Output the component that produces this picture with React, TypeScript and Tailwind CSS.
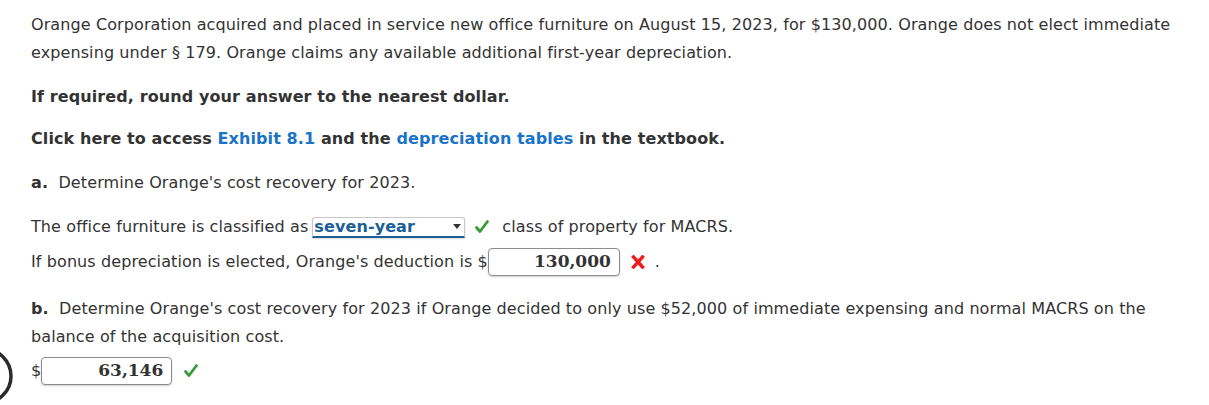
import React from 'react';

const Check: React.FC = () => (
  <svg width="16" height="16" viewBox="0 0 16 16" className="inline-block">
    <path d="M2.5 8.5 L6 12.5 L13.5 2.5" fill="none" stroke="#3a9a3a" strokeWidth="2.8" strokeLinecap="round" strokeLinejoin="round" />
  </svg>
);

const Cross: React.FC = () => (
  <svg width="14" height="14" viewBox="0 0 14 14" className="inline-block">
    <path d="M2.5 2 L11.5 12 M11.5 2 L2.5 12" fill="none" stroke="#ee1c1c" strokeWidth="3.4" strokeLinecap="square" />
  </svg>
);

const App: React.FC = () => {
  return (
    <div className="relative w-[1209px] h-[405px] bg-white overflow-hidden text-[16px] tracking-[0.1px] text-[#333] font-['Verdana','DejaVu_Sans',sans-serif]">
      {/* partial circle cut at the left edge */}
      <svg className="absolute left-0 top-[346px]" width="14" height="59" viewBox="0 0 14 59">
        <circle cx="-16" cy="30" r="27" fill="none" stroke="#2b2b2b" strokeWidth="3.5" />
      </svg>

      <div className="pl-[31px] pr-6 pt-[11px]">
        <p className="leading-[28px]">
          Orange Corporation acquired and placed in service new office furniture on August 15, 2023, for $130,000. Orange does not elect immediate expensing under § 179. Orange claims any available additional first-year depreciation.
        </p>

        <p className="mt-[16px] leading-[28px] font-bold">If required, round your answer to the nearest dollar.</p>

        <p className="mt-[14px] leading-[28px] font-bold">
          Click here to access <span className="text-[#1a73c8]">Exhibit 8.1</span> and the{' '}
          <span className="text-[#1a73c8]">depreciation tables</span> in the textbook.
        </p>

        <p className="mt-[16px] leading-[28px]">
          <span className="font-bold">a.</span>&nbsp; Determine Orange's cost recovery for 2023.
        </p>

        <div className="mt-[16px] flex items-center h-[28px]">
          <span>The office furniture is classified as</span>
          <div className="ml-[4px] relative w-[153px] h-[21px] bg-white border border-[#c8c8c8] border-b-2 border-b-[#1b5f99] rounded-t-[3px] shadow-[0_1px_2px_rgba(0,0,0,0.15)] flex items-center">
            <span className="pl-[1px] font-bold text-[#1b5f99] leading-none">seven-year</span>
            <svg className="absolute right-[3px] top-[6px]" width="8" height="6" viewBox="0 0 8 6">
              <path d="M0 0 L8 0 L4 5 Z" fill="#333" />
            </svg>
          </div>
          <span className="ml-[9px] flex items-center"><Check /></span>
          <span className="ml-[12px]">class of property for MACRS.</span>
        </div>

        <div className="mt-[7px] flex items-center h-[28px]">
          <span>If bonus depreciation is elected, Orange's deduction is $</span>
          <div className="w-[132px] h-[28px] border border-[#8c8c8c] rounded-[4px] shadow-[0_1px_2px_rgba(0,0,0,0.2)] flex items-center justify-end pr-[8px] font-['DejaVu_Serif',serif] font-bold text-[17px] tracking-normal text-[#333]">
            130,000
          </div>
          <span className="ml-[11px] flex items-center"><Cross /></span>
          <span className="ml-[10px]">.</span>
        </div>

        <p className="mt-[19px] leading-[28px]">
          <span className="font-bold">b.</span>&nbsp; Determine Orange's cost recovery for 2023 if Orange decided to only use $52,000 of immediate expensing and normal MACRS on the balance of the acquisition cost.
        </p>

        <div className="mt-[6px] flex items-center h-[28px]">
          <span>$</span>
          <div className="w-[131px] h-[28px] border border-[#8c8c8c] rounded-[4px] shadow-[0_1px_2px_rgba(0,0,0,0.2)] flex items-center justify-end pr-[8px] font-['DejaVu_Serif',serif] font-bold text-[17px] tracking-normal text-[#333]">
            63,146
          </div>
          <span className="ml-[11px] flex items-center"><Check /></span>
        </div>
      </div>
    </div>
  );
};

export default App;
